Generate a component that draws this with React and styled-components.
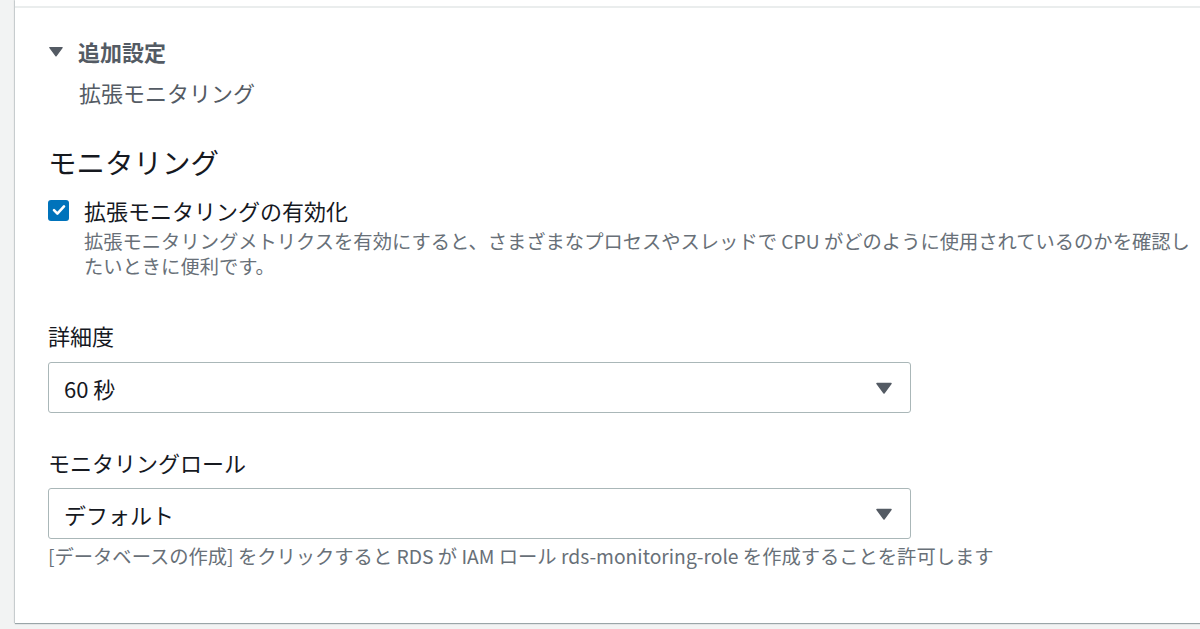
import React from 'react'
import styled, { createGlobalStyle } from 'styled-components'

const GlobalStyle = createGlobalStyle`
    html, body {
        margin: 0;
        padding: 0;
        background: #f2f3f3;
        overflow: hidden;
    }
    body {
        font-family: "Noto Sans CJK JP", "Noto Sans", sans-serif;
        color: #16191f;
    }
`

const Caret = ({ w = 16, h = 12, color = '#545b64' }) => (
    <svg width={w} height={h} viewBox="0 0 16 12">
        <path d="M1 1.5h14L8 11z" fill={color} stroke={color} strokeWidth="1.5" strokeLinejoin="round" />
    </svg>
)

const App = () => {
    return (
        <>
            <GlobalStyle />
            <Page>
                <Panel>
                    <Divider />
                    <Content>
                        <ExpandHeader>
                            <Caret w={14} h={11} />
                            <span>追加設定</span>
                        </ExpandHeader>
                        <SubText>拡張モニタリング</SubText>

                        <Heading>モニタリング</Heading>

                        <CheckRow>
                            <CheckBox>
                                <svg width="14" height="12" viewBox="0 0 14 12">
                                    <path d="M2 6.2l3.4 3.4L12 2.4" fill="none" stroke="#fff" strokeWidth="2.6" strokeLinecap="round" strokeLinejoin="round" />
                                </svg>
                            </CheckBox>
                            <span>拡張モニタリングの有効化</span>
                        </CheckRow>
                        <Description>
                            <DescLine>拡張モニタリングメトリクスを有効にすると、さまざまなプロセスやスレッドで CPU がどのように使用されているのかを確認し</DescLine>
                            <DescLine>たいときに便利です。</DescLine>
                        </Description>

                        <FieldLabel $gap={41}>詳細度</FieldLabel>
                        <Select $gap={12}>
                            <span>60 秒</span>
                            <Caret />
                        </Select>

                        <FieldLabel $gap={34}>モニタリングロール</FieldLabel>
                        <Select $gap={11}>
                            <span>デフォルト</span>
                            <Caret />
                        </Select>
                        <Hint>[データベースの作成] をクリックすると RDS が IAM ロール rds-monitoring-role を作成することを許可します</Hint>
                    </Content>
                </Panel>
            </Page>
        </>
    )
}

export default App

const Page = styled.div`
    width: 1200px;
    height: 629px;
    padding-left: 15px;
    box-sizing: border-box;
    overflow: hidden;
`

const Panel = styled.div`
    width: 1300px;
    background: #ffffff;
    padding-top: 6px;
    padding-bottom: 54px;
    box-shadow: 0 1px 1px 0 rgba(0, 28, 36, 0.35), -1px 0 1px 0 rgba(0, 28, 36, 0.12);
`

const Divider = styled.div`
    height: 2px;
    background: #eaeded;
`

const Content = styled.div`
    padding: 0 33px;
    display: flex;
    flex-direction: column;
    align-items: flex-start;
`

const ExpandHeader = styled.div`
    margin-top: 28px;
    display: flex;
    align-items: center;
    gap: 15px;
    padding-left: 1px;
    height: 30px;
    font-size: 22px;
    font-weight: 700;
    color: #545b64;
`

const SubText = styled.div`
    margin-top: 11px;
    padding-left: 31px;
    line-height: 30px;
    font-size: 22px;
    color: #545b64;
`

const Heading = styled.h2`
    margin: 37px 0 0;
    line-height: 36px;
    font-size: 28.5px;
    font-weight: 400;
    color: #16191f;
`

const CheckRow = styled.label`
    margin-top: 15px;
    display: flex;
    align-items: center;
    gap: 15px;
    line-height: 30px;
    font-size: 22px;
    color: #16191f;
`

const CheckBox = styled.span`
    width: 21px;
    height: 21px;
    border-radius: 3px;
    background: #0073bb;
    display: flex;
    align-items: center;
    justify-content: center;
`

const Description = styled.div`
    margin-top: 4px;
    padding-left: 36px;
    display: flex;
    flex-direction: column;
    font-size: 19.3px;
    color: #687078;
    white-space: nowrap;
`

const DescLine = styled.span`
    height: 25px;
    line-height: 25px;
`

const FieldLabel = styled.div`
    margin-top: ${p => p.$gap}px;
    line-height: 30px;
    font-size: 22px;
    color: #16191f;
`

const Select = styled.div`
    margin-top: ${p => p.$gap}px;
    width: 863px;
    height: 51px;
    box-sizing: border-box;
    border: 1px solid #aab7b8;
    border-radius: 3px;
    padding: 0 18px 0 15px;
    display: flex;
    align-items: center;
    justify-content: space-between;
    font-size: 22px;
    color: #16191f;
`

const Hint = styled.div`
    margin-top: 4px;
    line-height: 26px;
    font-size: 19.3px;
    color: #687078;
    white-space: nowrap;
`
